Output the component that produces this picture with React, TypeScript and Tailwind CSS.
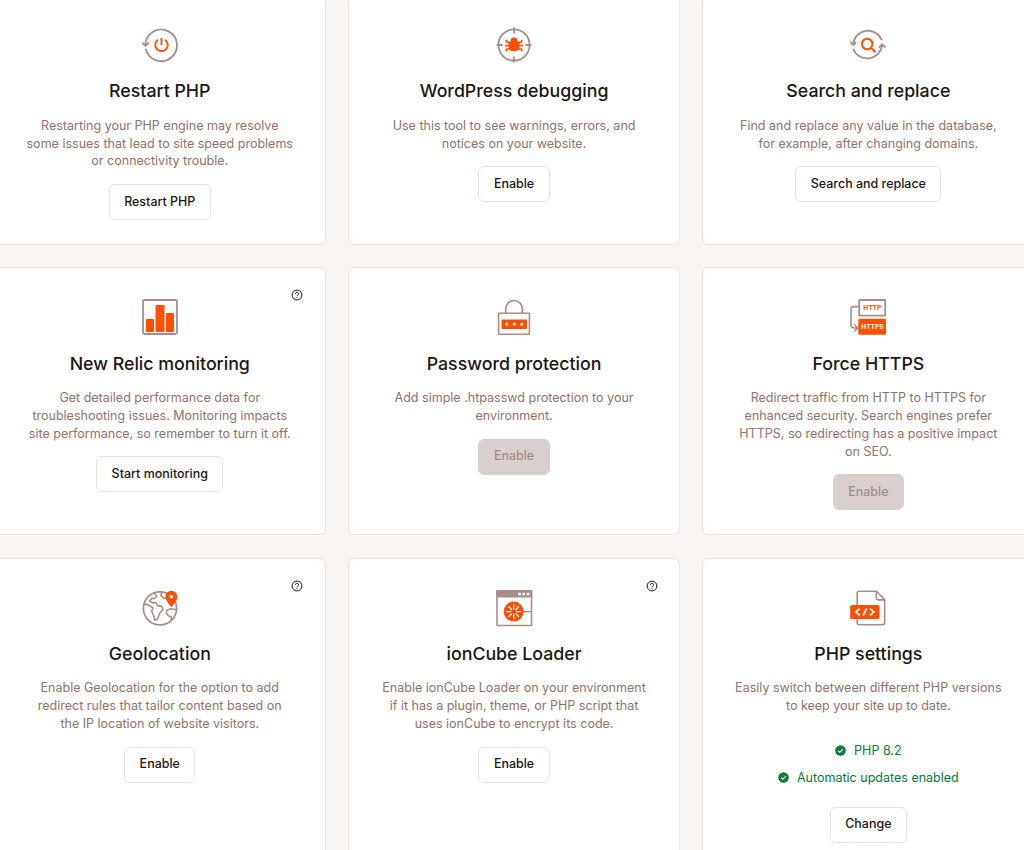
import React from 'react';

const TAUPE = '#a68d88';
const ORANGE = '#ff4f03';

interface Tool {
  title: string;
  description: string;
  action: string;
  icon: React.ReactNode;
  disabled?: boolean;
  help?: boolean;
  status?: string[];
}

const Icon: React.FC<{ children: React.ReactNode }> = ({ children }) => (
  <svg className="h-9 w-9 shrink-0 overflow-visible" viewBox="0 0 36 36" fill="none" stroke={TAUPE} strokeWidth="1.8">
    {children}
  </svg>
);

const RestartIcon = () => (
  <Icon>
    <path d="M3.4 18.5A15.8 15.8 0 1 1 3.8 21.9" />
    <path d="M.2 15.7L3.5 19L7 15.4" />
    <path d="M15.9 12.8A6.3 6.3 0 1 0 23.1 12.8M19.5 11v7" stroke={ORANGE} strokeWidth="1.9" />
  </Icon>
);

const DebugIcon = () => (
  <Icon>
    <circle cx="18" cy="18" r="15.6" />
    <path d="M18 .6v6M18 29.4v6M.6 18h6M29.4 18h6" />
    <path d="M15 13.8v-1.5q0-1.7 1.7-1.7h2.6q1.7 0 1.7 1.7v1.5l2.4 1.7v4.8q0 3.9-5.4 3.9t-5.4-3.9v-4.8z" fill={ORANGE} stroke="none" />
    <path d="M13.8 15.6l-3.2-.5-.5-2.2M22.2 15.6l3.2-.5.5-2.2M13.5 18.6H9M22.5 18.6H27M13.8 21.5l-3.2.7-.6 2.2M22.2 21.5l3.2.7.6 2.2" stroke={ORANGE} strokeWidth="1.6" />
  </Icon>
);

const SearchIcon = () => (
  <Icon>
    <path d="M3 17.8A15 15 0 0 1 31.9 13.2" />
    <path d="M3.2 21.7A15 15 0 0 0 32.2 17.6" />
    <path d="M.3 15L3.2 18L6.2 15M28.9 20.5L32.2 17.3L35.5 20.3" />
    <circle cx="17.2" cy="17" r="5.3" stroke={ORANGE} strokeWidth="2" />
    <path d="M21 20.8l4.4 4.4" stroke={ORANGE} strokeWidth="2" />
  </Icon>
);

const ChartIcon = () => (
  <Icon>
    <rect x="1" y="1" width="34" height="34" rx="1.5" />
    <g fill={ORANGE} stroke="none">
      <rect x="4" y="20" width="8" height="13" rx=".8" />
      <rect x="13.5" y="6" width="9" height="27" rx=".8" />
      <rect x="24" y="14" width="8" height="19" rx=".8" />
    </g>
  </Icon>
);

const LockIcon = () => (
  <Icon>
    <path d="M9.7 14v-4.2a8.3 8.3 0 0 1 16.6 0V14" strokeWidth="1.7" />
    <rect x="2.6" y="14.3" width="30.8" height="21" rx=".6" strokeWidth="1.6" />
    <rect x="5.5" y="20.5" width="25.5" height="9.5" rx="1" fill={ORANGE} stroke="none" />
    <path d="M9.2 25.3h3M10.7 23.8v3M16.8 25.3h3M18.3 23.8v3M24.2 25.3h3M25.7 23.8v3" stroke="#fff" strokeWidth="1.4" />
  </Icon>
);

const HttpsIcon = () => (
  <Icon>
    <rect x="9.2" y="1" width="26" height="15.7" rx=".5" />
    <path d="M9 7.6H3.5Q1 7.6 1 10.1v15.5Q1 29 4.5 29H7.6M4.4 25.5L7.7 29l-3.3 3.4" strokeWidth="1.6" />
    <rect x="8.3" y="19.7" width="27.7" height="16" rx="1" fill={ORANGE} stroke="none" />
    <g stroke="none" fontFamily="Inter, sans-serif" fontWeight="700" fontSize="6.6">
      <text x="13.2" y="11.3" textLength="18" fill={ORANGE}>HTTP</text>
      <text x="11.2" y="30.2" textLength="22.4" fill="#fff">HTTPS</text>
    </g>
  </Icon>
);

const GlobeIcon = () => (
  <Icon>
    <circle cx="18" cy="18.4" r="16.6" strokeWidth="1.7" />
    <path d="M12 3L15 6l-2.7 2.5H9.7L7.5 11l3 1.6h3.2l1.8 3 4 .8 1.6 2.8-3.4 4-2.2 5.8-2.6 1.2-1.6-5.4-1.6-3.6 1.2-3.4-3.6-2.3L2 13.7M20 2.4l-1.1 3L22 8.2h3M34 19.8l-5-1-4 1.3-.8 3 2 2.7 3.2.9-.2 3.3" strokeWidth="1.6" strokeLinejoin="round" />
    <path d="M29.4 17.3C26.3 13.2 23.4 10 23.4 6.7a6 6 0 0 1 12 0c0 3.3-2.9 6.5-6 10.6z" fill={ORANGE} stroke="none" />
    <circle cx="29.4" cy="6.8" r="1.8" fill="#fff" stroke="none" />
  </Icon>
);

const rays = [0, 45, 90, 135, 180, 225, 270, 315];

const LoaderIcon = () => (
  <Icon>
    <rect x="1" y="1.5" width="34.5" height="34" rx=".5" strokeWidth="1.6" />
    <path d="M.3 0h36v7.6H.3z" fill={TAUPE} stroke="none" />
    <path d="M22.3 2.7h2.6v2.6h-2.6zM26.5 2.7h2.6v2.6h-2.6zM30.7 2.7h2.6v2.6h-2.6z" fill="#fff" stroke="none" />
    <path d="M27 21.7h8.5" strokeWidth="1.4" />
    <circle cx="17.7" cy="21.6" r="10" fill={ORANGE} stroke="none" />
    {rays.map(angle => (
      <path key={angle} d="M17.7 18.7v-4" stroke="#fff" strokeWidth="1.3" strokeLinecap="round" transform={`rotate(${angle} 17.7 21.6)`} />
    ))}
  </Icon>
);

const CodeFileIcon = () => (
  <Icon>
    <path d="M7.2 15V3q0-1.7 1.7-1.7h17.6l8.2 8.4v22.9q0 2.2-2.2 2.2H9.2q-2 0-2-2V29" strokeWidth="1.6" />
    <path d="M26.3 1.5v6.2q0 2.2 2.2 2.2h6" strokeWidth="1.6" />
    <rect x=".2" y="15" width="29.3" height="14" rx="1.5" fill={ORANGE} stroke="none" />
    <path d="M9.7 18.6L5.8 22l3.9 3.4M20 18.6l3.9 3.4-3.9 3.4M16.7 18.3l-3.6 7.4" stroke="#fff" strokeWidth="1.7" />
  </Icon>
);

const HelpIcon = () => (
  <svg className="absolute top-[21px] right-[21.5px] h-3 w-3" viewBox="0 0 12 12" fill="none" stroke="#1d1919">
    <circle cx="6" cy="6" r="4.9" strokeWidth="1" />
    <path d="M4.4 4.8a1.6 1.5 0 1 1 2.3 1.3Q6 6.4 6 7.2M6 8v1" strokeWidth="1" />
  </svg>
);

const CheckIcon = () => (
  <svg className="-mt-px h-[11px] w-[11px]" viewBox="0 0 11 11" fill="none">
    <circle cx="5.5" cy="5.5" r="5.3" fill="#0b7a3b" />
    <path d="M3.2 5.7l1.6 1.6 3-3.1" stroke="#fff" strokeWidth="1.1" />
  </svg>
);

const tools: Tool[] = [
  {
    title: 'Restart PHP',
    description: 'Restarting your PHP engine may resolve some issues that lead to site speed problems or connectivity trouble.',
    action: 'Restart PHP',
    icon: <RestartIcon />,
  },
  {
    title: 'WordPress debugging',
    description: 'Use this tool to see warnings, errors, and notices on your website.',
    action: 'Enable',
    icon: <DebugIcon />,
  },
  {
    title: 'Search and replace',
    description: 'Find and replace any value in the database, for example, after changing domains.',
    action: 'Search and replace',
    icon: <SearchIcon />,
  },
  {
    title: 'New Relic monitoring',
    description: 'Get detailed performance data for troubleshooting issues. Monitoring impacts site performance, so remember to turn it off.',
    action: 'Start monitoring',
    icon: <ChartIcon />,
    help: true,
  },
  {
    title: 'Password protection',
    description: 'Add simple .htpasswd protection to your environment.',
    action: 'Enable',
    icon: <LockIcon />,
    disabled: true,
  },
  {
    title: 'Force HTTPS',
    description: 'Redirect traffic from HTTP to HTTPS for enhanced security. Search engines prefer HTTPS, so redirecting has a positive impact on SEO.',
    action: 'Enable',
    icon: <HttpsIcon />,
    disabled: true,
  },
  {
    title: 'Geolocation',
    description: 'Enable Geolocation for the option to add redirect rules that tailor content based on\nthe IP location of website visitors.',
    action: 'Enable',
    icon: <GlobeIcon />,
    help: true,
  },
  {
    title: 'ionCube Loader',
    description: 'Enable ionCube Loader on your environment if it has a plugin, theme, or PHP script that uses ionCube to encrypt its code.',
    action: 'Enable',
    icon: <LoaderIcon />,
    help: true,
  },
  {
    title: 'PHP settings',
    description: 'Easily switch between different PHP versions to keep your site up to date.',
    action: 'Change',
    icon: <CodeFileIcon />,
    status: ['PHP 8.2', 'Automatic updates enabled'],
  },
];

const ToolCard: React.FC<{ tool: Tool }> = ({ tool }) => (
  <div className="relative flex flex-col items-center rounded-[6px] border border-[#eee0db] bg-white px-[29px] pt-[31px] pb-6 text-center">
    {tool.help && <HelpIcon />}
    {tool.icon}
    <h2 className="mt-[16.2px] text-[17.78px] leading-6 font-medium text-[#1a1616]">{tool.title}</h2>
    <p className="mt-[13.5px] text-[12.52px] leading-[17.8px] whitespace-pre-line text-[#8d736e]">{tool.description}</p>
    {tool.status && (
      <div className="mt-[23px] flex flex-col items-center">
        {tool.status.map(label => (
          <div key={label} className="flex h-[27px] items-center gap-2 text-[12.52px] text-[#0b7a3b]">
            <CheckIcon />
            {label}
          </div>
        ))}
        <div className="h-px" />
      </div>
    )}
    <button
      disabled={tool.disabled}
      className="mt-[13.8px] h-9 rounded-[6px] border border-[#eee0db] px-[14.5px] text-[12.48px] font-medium text-[#1a1616] disabled:border-[#d8d0ce] disabled:bg-[#d8d0ce] disabled:text-[#a68d88]"
    >
      {tool.action}
    </button>
  </div>
);

const App: React.FC = () => (
  <div className="h-[850px] overflow-hidden bg-[#f8f5f2] font-['Inter',sans-serif]">
    <div className="-mt-[4.9px] -ml-[6.4px] grid w-[1040.9px] grid-cols-3 gap-x-[22px] gap-y-[22.5px]">
      {tools.map(tool => (
        <ToolCard key={tool.title} tool={tool} />
      ))}
    </div>
  </div>
);

export default App;
